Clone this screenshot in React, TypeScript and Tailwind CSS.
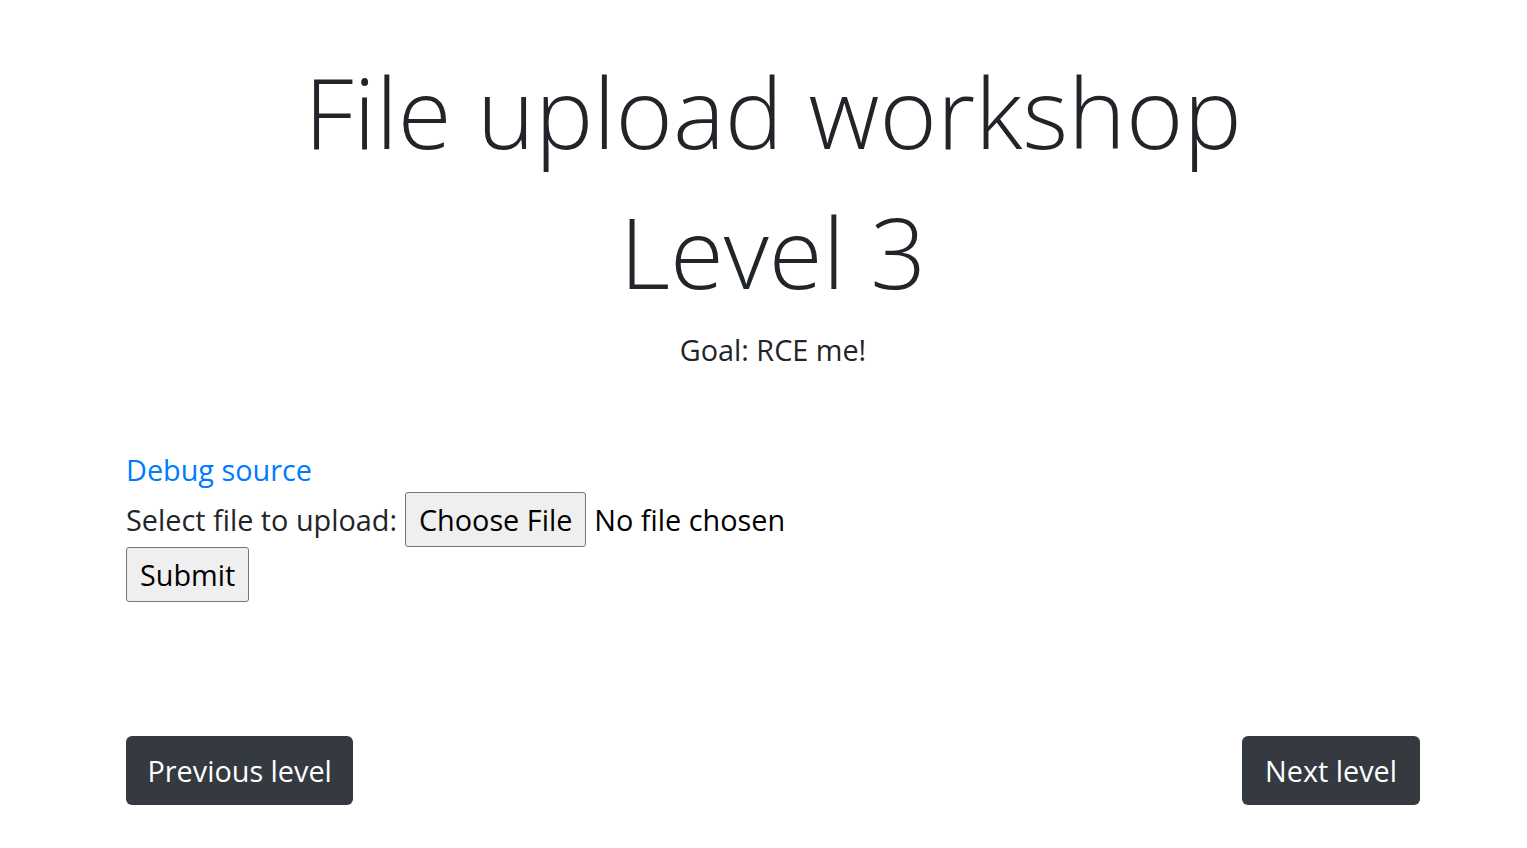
export default function App() {
  return (
    <div
      className="min-h-[848px] bg-white text-[#212529]"
      style={{ fontFamily: '"Open Sans", "Noto Sans", sans-serif' }}
    >
      <div className="pl-[126px] pr-[107px]">
        <h1 className="pt-[41px] text-center text-[98px] font-light leading-[140px]">
          File upload workshop
          <br />
          Level 3
        </h1>
        <p className="mt-[7px] text-center text-[28.8px] leading-[44px]">Goal: RCE me!</p>

        <div className="mt-[76px] text-[28.8px] leading-[44px]">
          <a href="#" className="text-[#007bff] hover:underline">
            Debug source
          </a>
          <form className="flex flex-col items-start" onSubmit={(e) => e.preventDefault()}>
            <div className="flex items-center">
              <span>Select file to upload:</span>
              <button
                type="button"
                className="ml-[8px] h-[55px] rounded-[3px] border border-[#767676] bg-[#efefef] px-[13px] text-black"
              >
                Choose File
              </button>
              <span className="ml-[8px] text-black">No file chosen</span>
            </div>
            <button
              type="submit"
              className="h-[55px] rounded-[3px] border border-[#767676] bg-[#efefef] px-[13px] text-black"
            >
              Submit
            </button>
          </form>
        </div>

        <div className="mt-[134px] flex justify-between">
          <a
            href="#"
            className="flex h-[69px] items-center rounded-[6px] bg-[#343a40] px-[21.5px] text-[28.8px] text-white"
          >
            Previous level
          </a>
          <a
            href="#"
            className="flex h-[69px] items-center rounded-[6px] bg-[#343a40] px-[23px] text-[28.8px] text-white"
          >
            Next level
          </a>
        </div>
      </div>
    </div>
  );
}
